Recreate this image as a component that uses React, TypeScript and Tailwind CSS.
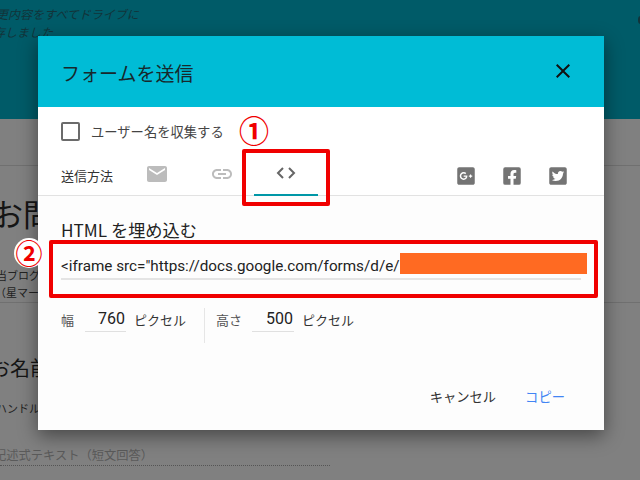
import { FaFacebookSquare, FaGooglePlusSquare, FaTwitterSquare } from "react-icons/fa";
import { MdClose, MdEmail, MdLink } from "react-icons/md";

const font = { fontFamily: '"Noto Sans CJK JP", Roboto, sans-serif' };

function SizeField({ label, value, labelWidth, inputWidth }: { label: string; value: string; labelWidth: string; inputWidth: string }) {
  return (
    <div className="flex items-start">
      <span className={`text-[13px] leading-[24px] text-[#555] ${labelWidth}`}>{label}</span>
      <span className={`h-[24px] border-b border-[#e0e0e0] pr-[1px] text-right font-['Roboto'] text-[16px] leading-[22px] text-[#222] ${inputWidth}`}>
        {value}
      </span>
      <span className="ml-[8px] text-[13px] leading-[24px] text-[#333]">ピクセル</span>
    </div>
  );
}

export default function App() {
  return (
    <div className="relative h-[480px] w-[640px] overflow-hidden bg-[#808080] text-[#222]" style={font}>
      {/* page behind the dialog */}
      <div className="h-[119px] bg-[#005b68] pt-[5px] text-[12px] italic leading-[18px] text-[#12343a]">
        <p className="-ml-[4px] whitespace-nowrap">更内容をすべてドライブに</p>
        <p className="-ml-[7px] whitespace-nowrap">存しました</p>
      </div>
      <div className="mt-[46px] border-t border-[#707070] pl-0">
        <p className="-ml-[8px] mt-[25px] whitespace-nowrap text-[31px] leading-[44px] text-[#151515]">お問</p>
        <div className="mt-[32px] border-b border-[#707070] pb-[1px] text-[11px] leading-[17px] text-[#222]">
          <p className="-ml-[4px] whitespace-nowrap">当ブログク</p>
          <p className="-ml-[5px] whitespace-nowrap">（星マー</p>
        </div>
        <p className="-ml-[10px] mt-[50px] whitespace-nowrap text-[20px] leading-[30px] text-[#151515]">お名前</p>
        <p className="-ml-[4px] mt-[15px] whitespace-nowrap text-[11px] leading-[20px] text-[#222]">ハンドル</p>
        <p className="mt-[27px] w-[330px] whitespace-nowrap border-b border-dotted border-[#555] text-[12.25px] leading-[20px] text-[#5a5a5a]">
          <span className="-ml-[6px] block">記述式テキスト（短文回答）</span>
        </p>
      </div>
      <span className="absolute right-[-4px] top-[16px] h-[8px] w-[6px] rounded-full bg-[#12343a]" />

      {/* dialog */}
      <div className="absolute left-[38px] top-[36px] flex h-[394px] w-[566px] flex-col bg-[#fdfdfd] shadow-[0_6px_18px_rgba(0,0,0,0.45)]">
        <div className="flex h-[71px] shrink-0 items-center justify-between bg-[#00bcd6] pl-[23px] pr-[29px]">
          <h1 className="pt-[3px] text-[19px] font-normal text-[#17282c]">フォームを送信</h1>
          <MdClose className="-mt-[2px] h-[24px] w-[24px] text-[#111]" />
        </div>
        <div className="h-[89px] shrink-0 border-b border-[#e2e2e2] bg-white">
          <div className="flex items-center pl-[23px] pt-[15px]">
            <span className="h-[19px] w-[19px] rounded-[2px] border-2 border-[#6b6b6b]" />
            <span className="ml-[11px] text-[13.3px] leading-[19px] text-[#444]">ユーザー名を収集する</span>
          </div>
          <div className="mt-[15px] flex h-[40px] items-center pl-[23px]">
            <span className="w-[84px] text-[13px] text-[#333]">送信方法</span>
            <MdEmail className="-mt-[4px] h-[24px] w-[24px] text-[#bcbcbc]" />
            <MdLink className="-mt-[4px] ml-[41px] h-[24px] w-[24px] text-[#bcbcbc]" />
            <div className="ml-[20px] flex h-[40px] w-[64px] flex-col items-center justify-end">
              <svg viewBox="0 0 20 14" className="mb-[14px] h-[14px] w-[20px] fill-none stroke-[#666] stroke-2">
                <path d="M7 2 2 7l5 5M13 2l5 5-5 5" />
              </svg>
              <span className="h-[2px] w-full bg-[#0097a7]" />
            </div>
            <div className="ml-auto mr-[36px] flex gap-[26px] text-[#747474]">
              <FaGooglePlusSquare className="h-[20px] w-[20px]" />
              <FaFacebookSquare className="h-[20px] w-[20px]" />
              <FaTwitterSquare className="h-[20px] w-[20px]" />
            </div>
          </div>
        </div>
        <div className="flex flex-1 flex-col pl-[23px] pr-[24px]">
          <h2 className="mt-[23px] text-[17.2px] font-normal leading-[22px] text-[#222]">HTML を埋め込む</h2>
          <div className="relative mt-[14px] h-[25px] w-[520px] border-b-2 border-[#e4e4e4] font-['Roboto'] text-[15.25px] leading-[23px] text-[#222]">
            &lt;iframe src="https://docs.google.com/forms/d/e/
            <span className="absolute left-[339px] top-[-2px] h-[21px] w-[187px] bg-[#ff6a22]" />
          </div>
          <div className="mt-[28px] flex h-[35px]">
            <SizeField label="幅" value="760" labelWidth="w-[24px]" inputWidth="w-[41px]" />
            <span className="ml-[18px] mr-[11px] w-px bg-[#e6e6e6]" />
            <SizeField label="高さ" value="500" labelWidth="w-[36px]" inputWidth="w-[42px]" />
          </div>
          <div className="mt-auto mb-[23px] flex justify-end gap-[29px] pr-[15px] text-[13.3px] leading-[20px]">
            <span className="text-[#333]">キャンセル</span>
            <span className="text-[#4285f4]">コピー</span>
          </div>
        </div>
      </div>

      {/* red annotations */}
      <div className="absolute left-[242px] top-[149px] h-[57px] w-[88px] rounded-[2px] border-[4px] border-[#f00000]" />
      <div className="absolute left-[49px] top-[240px] h-[58px] w-[549px] rounded-[2px] border-[4px] border-[#f00000]" />
      <span className="absolute left-[239px] top-[111px] text-[30px] font-bold leading-[36px] text-[#f00000]">①</span>
      <span className="absolute left-[14px] top-[238px] flex h-[30px] w-[30px] items-center justify-center rounded-full bg-white text-[27px] font-bold leading-[30px] text-[#f00000]">②</span>
    </div>
  );
}
